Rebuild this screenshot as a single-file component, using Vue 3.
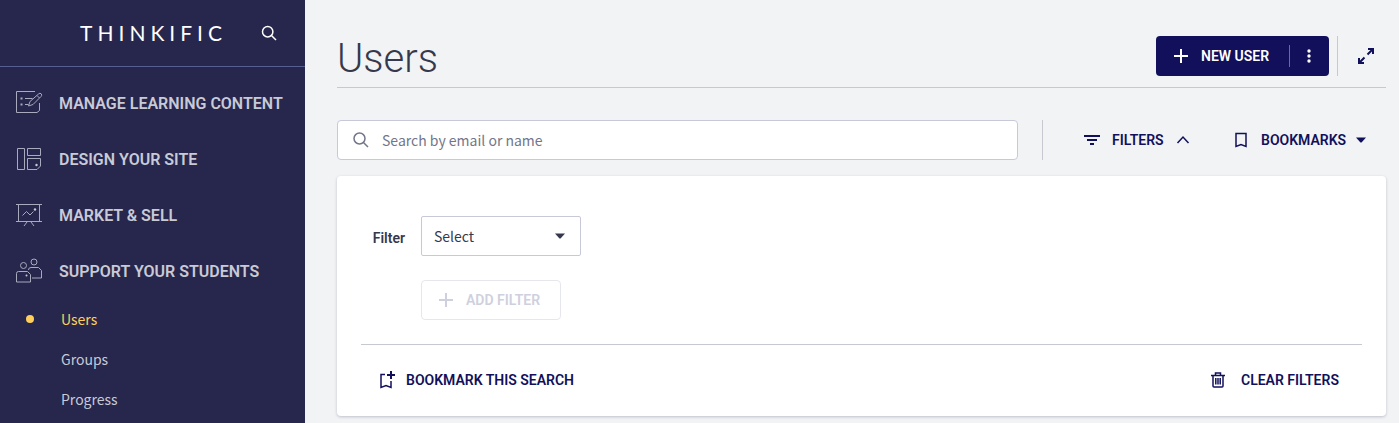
<script setup>
import { ref } from 'vue'

const search = ref('')
const filter = ref('')

const sections = [
  { id: 'content', label: 'MANAGE LEARNING CONTENT' },
  { id: 'design', label: 'DESIGN YOUR SITE' },
  { id: 'market', label: 'MARKET & SELL' },
  { id: 'support', label: 'SUPPORT YOUR STUDENTS' },
]
const pages = ['Users', 'Groups', 'Progress']
const current = ref('Users')
</script>

<template>
  <div class="app">
    <aside class="sidebar">
      <header class="brand">
        <a class="logo" href="#">THINKIFIC</a>
        <button class="brand-search" type="button" aria-label="Search">
          <svg width="16" height="16" viewBox="0 0 16 16" class="line"><circle cx="6.7" cy="6.7" r="5.2" /><path d="M10.5 10.5L15 15" /></svg>
        </button>
      </header>
      <nav class="nav">
        <a v-for="s in sections" :key="s.id" class="section" href="#">
          <svg class="section-icon" width="28" height="28" viewBox="0 0 28 28">
            <g v-if="s.id === 'content'">
              <path d="M20 2.500H1.500V23.500H22L24.500 21.500V14" />
              <path d="M10 9.500H17.500M10 15.500H13.500M13.500 17L15 12.500L23.500 5Q25 3.500 26.300 4.900Q27.300 6.300 26 7.500L18 15.500L13.500 17M22 6.500L24.500 9" />
              <path d="M5.500 9.500H7.500M5.500 15.500H7.500" class="dot-line" />
            </g>
            <g v-else-if="s.id === 'design'">
              <path d="M2.500 3.500H9.500V24.500H2.500ZM12.500 3.500H25.500V10.500H12.500ZM12.500 13.500H25.500V21L22 24.500H12.500Z" />
              <circle cx="21.500" cy="20" r="1.200" class="solid" />
            </g>
            <g v-else-if="s.id === 'market'">
              <path d="M1 3.500H27M1 20.500H27M3.500 3.500V20.500M24.500 3.500V20.500M12 21L9 25M16 21L19 25" />
              <path d="M7.500 14.500L11.500 10.500L15 14L18.500 10.500" />
              <circle cx="20" cy="8.500" r="1.200" class="solid" />
            </g>
            <g v-else>
              <circle cx="8.500" cy="8.500" r="3" />
              <circle cx="19" cy="5" r="3" />
              <path d="M1.500 25V16.500Q1.500 14.500 3.500 14.500H12.500L15.500 17.500V25ZM13.500 13Q13.500 10.500 16 10.500H23.500L26.500 13.500V21H17" />
              <circle cx="11.500" cy="18.500" r="1" class="solid" />
            </g>
          </svg>
          <span>{{ s.label }}</span>
        </a>
        <a v-for="p in pages" :key="p" class="page" :class="{ active: p === current }" href="#" @click.prevent="current = p">{{ p }}</a>
      </nav>
    </aside>

    <main class="main">
      <header class="heading">
        <h1>Users</h1>
        <div class="heading-actions">
          <div class="split">
            <button class="new-user" type="button">
              <svg width="14" height="14" viewBox="0 0 14 14" class="line bold"><path d="M7 0V14M0 7H14" /></svg>
              <span>NEW USER</span>
            </button>
            <button class="more" type="button" aria-label="More actions">
              <svg width="4" height="14" viewBox="0 0 4 14" fill="currentColor"><circle cx="2" cy="2" r="1.700" /><circle cx="2" cy="7" r="1.700" /><circle cx="2" cy="12" r="1.700" /></svg>
            </button>
          </div>
          <span class="rule"></span>
          <button class="expand" type="button" aria-label="Expand">
            <svg width="18" height="18" viewBox="0 0 18 18" class="line bold"><path d="M11 2H16V7M16 2L10.500 7.500M7 16H2V11M2 16L7.500 10.500" /></svg>
          </button>
        </div>
      </header>

      <div class="toolbar">
        <label class="search">
          <svg width="16" height="16" viewBox="0 0 16 16" class="line"><circle cx="6.500" cy="6.500" r="5.500" /><path d="M10.500 10.500L15 15" /></svg>
          <input v-model="search" type="text" placeholder="Search by email or name" aria-label="Search by email or name" />
        </label>
        <span class="rule"></span>
        <button class="text-button filters" type="button" aria-expanded="true">
          <svg width="16" height="16" viewBox="0 0 16 16" class="line bold"><path d="M0 4H16M3 8H13M6 12H10" /></svg>
          <span class="grow">FILTERS</span>
          <svg width="14" height="14" viewBox="0 0 14 14" class="line"><path d="M1.500 10L7 4L12.500 10" /></svg>
        </button>
        <button class="text-button bookmarks" type="button">
          <svg width="12" height="16" viewBox="0 0 12 16" class="line"><path d="M1 14.500V1.500H11V14.500L6 12.500Z" /></svg>
          <span class="grow">BOOKMARKS</span>
          <svg width="10" height="6" viewBox="0 0 10 6" fill="currentColor"><path d="M0 0.500H10L6 5Q5 6 4 5Z" /></svg>
        </button>
      </div>

      <section class="card">
        <div class="fields">
          <label for="filter">Filter</label>
          <div class="select">
            <select id="filter" v-model="filter">
              <option value="">Select</option>
            </select>
            <svg class="caret" width="10" height="6" viewBox="0 0 10 6" fill="currentColor"><path d="M0 0.500H10L6 5Q5 6 4 5Z" /></svg>
          </div>
          <button class="add" type="button" disabled>
            <svg width="14" height="14" viewBox="0 0 14 14" class="line bold"><path d="M7 0V14M0 7H14" /></svg>
            <span>ADD FILTER</span>
          </button>
        </div>
        <footer class="card-footer">
          <button class="text-button save" type="button">
            <svg width="16" height="20" viewBox="0 0 16 20" class="line"><path d="M6 4.500H2V17.500L7 15.500L12 17.500V11" /><path d="M12 1V9M8 5H16" class="bold" /></svg>
            <span>BOOKMARK THIS SEARCH</span>
          </button>
          <button class="text-button clear" type="button">
            <svg width="14" height="16" viewBox="0 0 14 16" class="line"><path d="M0 3.500H14M4.500 3V1H9.500V3M2 4V14Q2 15 3 15H11Q12 15 12 14V4M4.800 6V12.500M7 6V12.500M9.200 6V12.500" /></svg>
            <span class="grow">CLEAR FILTERS</span>
          </button>
        </footer>
      </section>
    </main>
  </div>
</template>

<style>
body {
  background: #f1f3f5;
}
</style>

<style scoped>
* {
  box-sizing: border-box;
}
.app {
  display: flex;
  min-height: 100vh;
  font-family: "Noto Sans CJK SC", "Noto Sans", sans-serif;
  font-size: 14px;
  color: #36394d;
}
button {
  display: flex;
  align-items: center;
  margin: 0;
  padding: 0;
  border: 0;
  background: none;
  color: #12105a;
  font: 600 14px/20px Roboto, sans-serif;
  white-space: nowrap;
  cursor: pointer;
}
svg {
  flex: none;
}
.line {
  fill: none;
  stroke: currentColor;
  stroke-width: 1.500;
}
.bold {
  stroke-width: 2;
}
.grow {
  flex: 1;
  text-align: left;
}
.rule {
  width: 1px;
  height: 40px;
  background: #c7c9d1;
}

.sidebar {
  flex: none;
  width: 305px;
  background: #27264d;
}
.brand {
  display: flex;
  align-items: center;
  justify-content: flex-end;
  gap: 34px;
  height: 67px;
  padding-right: 28px;
  border-bottom: 1px solid #555d91;
}
.logo {
  color: #fff;
  font: 400 21px/24px Lato, sans-serif;
  letter-spacing: 5px;
  text-decoration: none;
}
.brand-search {
  color: #fff;
}
.nav {
  padding-top: 8px;
}
.section {
  display: flex;
  align-items: center;
  gap: 16px;
  height: 56px;
  padding-left: 15px;
  color: #c8cad5;
  font: 600 16px/24px Roboto, sans-serif;
  text-decoration: none;
  white-space: nowrap;
}
.section span {
  padding-top: 2px;
}
.section-icon {
  fill: none;
  stroke: #a9aabd;
  stroke-width: 1;
}
.dot-line {
  stroke-width: 2;
}
.solid {
  fill: #c8cad5;
  stroke: none;
}
.page {
  position: relative;
  display: block;
  padding-left: 61px;
  color: #c8cad5;
  line-height: 40px;
  text-decoration: none;
}
.page.active {
  color: #ffcf5c;
}
.page.active::before {
  content: "";
  position: absolute;
  left: 26px;
  top: 16px;
  width: 8px;
  height: 8px;
  border-radius: 50%;
  background: #ffcf5c;
}

.main {
  flex: 1;
  min-width: 0;
  padding: 36px 13px 0 32px;
}
.heading {
  display: flex;
  justify-content: space-between;
  height: 52px;
  border-bottom: 1px solid #c7c9d1;
}
h1 {
  margin: 0;
  font: 300 40px/46px Roboto, sans-serif;
}
.heading-actions {
  display: flex;
  gap: 8px;
}
.split {
  display: flex;
  align-items: center;
  height: 40px;
  border-radius: 4px;
  background: #12105a;
}
.split button {
  color: #fff;
}
.new-user {
  gap: 13px;
  width: 133px;
  height: 40px;
  padding-left: 18px;
}
.more {
  justify-content: center;
  width: 40px;
  height: 22px;
  padding-right: 2px;
  border-left: 1px solid #6b6a98;
}
.expand {
  justify-content: center;
  width: 40px;
  height: 40px;
}

.toolbar {
  display: flex;
  margin-top: 32px;
}
.search {
  display: flex;
  flex: 1;
  align-items: center;
  gap: 13px;
  height: 40px;
  margin-right: 24px;
  padding: 0 15px;
  border: 1px solid #c7c9d9;
  border-radius: 4px;
  background: #fff;
  color: #73768a;
}
.search input {
  flex: 1;
  min-width: 0;
  padding: 0;
  border: 0;
  outline: 0;
  background: none;
  color: #36394d;
  font: inherit;
}
.search input::placeholder {
  color: #73768a;
  opacity: 1;
}
.text-button {
  gap: 12px;
  height: 40px;
}
.filters {
  width: 106px;
  margin-left: 41px;
}
.bookmarks {
  gap: 10px;
  width: 131px;
  margin: 0 20px 0 45px;
}
.bookmarks .grow {
  padding-left: 4px;
}

.card {
  margin-top: 16px;
  padding: 40px 24px 16px;
  border-radius: 4px;
  background: #fff;
  box-shadow: 0 1px 3px rgba(39, 38, 77, 0.25);
}
.fields {
  display: grid;
  grid-template-columns: 44px 160px;
  gap: 24px 16px;
  align-items: center;
  padding-bottom: 24px;
  border-bottom: 1px solid #c7c9d1;
}
.fields label {
  padding-top: 4px;
  font: 600 14px/20px Roboto, sans-serif;
  text-align: right;
}
.select {
  position: relative;
}
select {
  display: block;
  width: 100%;
  height: 40px;
  padding: 0 12px;
  border: 1px solid #c7c9d9;
  border-radius: 2px;
  appearance: none;
  background: #fff;
  color: #36394d;
  font: inherit;
}
.caret {
  position: absolute;
  top: 17px;
  right: 16px;
  pointer-events: none;
}
.add {
  grid-column: 2;
  gap: 13px;
  width: 140px;
  height: 40px;
  padding-left: 17px;
  border: 1px solid #e6e7ec;
  border-radius: 4px;
  color: #cfd0de;
}
.card-footer {
  display: flex;
  justify-content: space-between;
  padding: 15px 17px 0 18px;
}
.save {
  gap: 11px;
}
.clear {
  gap: 16px;
  width: 134px;
}
</style>
